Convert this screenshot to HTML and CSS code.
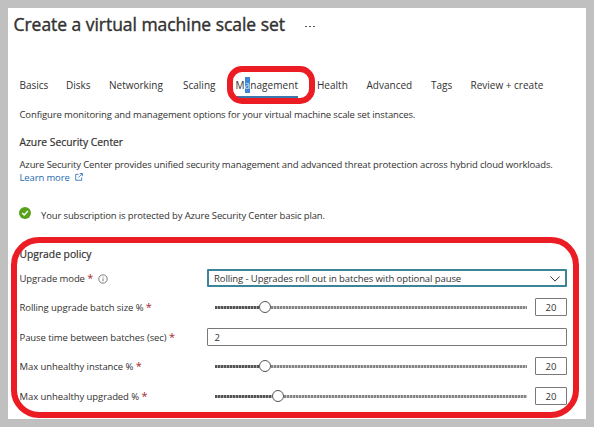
FILE: index.html
```
<!DOCTYPE html>
<html lang="en">
<head>
<meta charset="utf-8">
<title>Create a virtual machine scale set</title>
<link rel="stylesheet" href="styles.css">
</head>
<body>
<main class="panel">
  <header class="header">
    <h1 class="title">Create a virtual machine scale set</h1>
    <span class="more"><i></i><i></i><i></i></span>
  </header>
  <nav class="tabs">
    <span class="tab">Basics</span>
    <span class="tab">Disks</span>
    <span class="tab">Networking</span>
    <span class="tab">Scaling</span>
    <span class="tab active">M<mark>a</mark>nagement</span>
    <span class="tab">Health</span>
    <span class="tab">Advanced</span>
    <span class="tab">Tags</span>
    <span class="tab">Review + create</span>
  </nav>
  <p class="intro">Configure monitoring and management options for your virtual machine scale set instances.</p>
  <h2 class="section">Azure Security Center</h2>
  <p class="about">Azure Security Center provides unified security management and advanced threat protection across hybrid cloud workloads.<br>
    <a class="link">Learn more<svg class="ext" viewBox="0 0 9 9"><path d="M4 1.5H.8v6.7h6.7V5M5.3.6h3v3M8.2.7 3.8 5.1"/></svg></a></p>
  <div class="status">
    <svg class="ok" viewBox="0 0 12 12"><circle cx="6" cy="6" r="6"/><path d="m3.2 6.1 2 2 3.7-4"/></svg>
    <span>Your subscription is protected by Azure Security Center basic plan.</span>
  </div>
  <h2 class="section policy">Upgrade policy</h2>
  <div class="form">
    <div class="row">
      <label class="label">Upgrade mode <b>*</b><svg class="info" viewBox="0 0 10 10"><circle cx="5" cy="5" r="4.2"/><path d="M5 4.3v3M5 2.6v.9"/></svg></label>
      <div class="field select"><span>Rolling - Upgrades roll out in batches with optional pause</span><svg class="chev" viewBox="0 0 10 6"><path d="m.4.5 4.6 4.6L9.6.5"/></svg></div>
    </div>
    <div class="row">
      <label class="label">Rolling upgrade batch size % <b>*</b></label>
      <div class="slider"><span class="track done low"></span><span class="knob"></span><span class="track"></span></div>
      <div class="field value">20</div>
    </div>
    <div class="row">
      <label class="label">Pause time between batches (sec) <b>*</b></label>
      <div class="field">2</div>
    </div>
    <div class="row">
      <label class="label">Max unhealthy instance % <b>*</b></label>
      <div class="slider"><span class="track done low"></span><span class="knob"></span><span class="track"></span></div>
      <div class="field value">20</div>
    </div>
    <div class="row">
      <label class="label">Max unhealthy upgraded % <b>*</b></label>
      <div class="slider"><span class="track done high"></span><span class="knob"></span><span class="track"></span></div>
      <div class="field value">20</div>
    </div>
  </div>
</main>
<div class="callout tab-callout"></div>
<div class="callout policy-callout"></div>
</body>
</html>
```
FILE: styles.css
```
* { box-sizing: border-box; }
body {
  margin: 0;
  width: 594px;
  height: 427px;
  padding: 8px;
  overflow: hidden;
  background: #c0c0c0;
  color: #323130;
  font: 9.5px/13px "Open Sans", "Noto Sans", sans-serif;
  white-space: nowrap;
}
h1, h2, p { margin: 0; }
svg { fill: none; stroke: currentColor; }
.panel { width: 578px; height: 411px; padding: 4px 0 0 11.5px; background: #fff; }
.header { display: flex; height: 24px; margin-left: -6px; }
.title { width: 291px; font-size: 17.5px; line-height: 25px; font-weight: 400; letter-spacing: -.04px; -webkit-text-stroke: .4px; }
.more { display: flex; gap: 2px; padding-top: 14px; }
.more i { width: 2px; height: 1px; background: #555; }
.tabs {
  display: grid;
  grid-template-columns: 46.5px 43px 74px 52.5px 81.5px 49.5px 64.5px 39.5px 80px;
  height: 23px;
  margin-top: 39px;
  font-size: 10px;
  line-height: 20px;
}
.tab { justify-self: start; }
.active { border-bottom: 2px solid #3a78b0; letter-spacing: .07px; }
mark { padding: 1px 0; background: #3e86d6; color: #cfe3f8; }
.intro { margin-top: 10px; letter-spacing: -.13px; }
.section { margin-top: 14px; font-size: 10.3px; line-height: 15px; font-weight: 400; -webkit-text-stroke: .2px; }
.about { margin-top: 8px; letter-spacing: -.14px; }
.link { color: #1f6bb0; }
.ext { width: 8px; height: 8px; margin-left: 5px; stroke-width: .9; vertical-align: 0; }
.status { display: flex; height: 14px; margin: 23px 0 0 -.5px; letter-spacing: -.14px; line-height: 17px; }
.ok { width: 12px; height: 12px; margin-right: 10px; }
.ok circle { fill: #57a11b; stroke: none; }
.ok path { stroke: #fff; stroke-width: 1.4; }
.policy { margin-top: 26px; }
.form { display: grid; grid-template-rows: 29px 30px 29px 30px 18px; margin-top: 7px; width: 547.5px; }
.row { display: flex; height: 18px; }
.label { width: 187.5px; line-height: 20px; letter-spacing: -.08px; }
.label b { font-size: 11px; line-height: 1; font-weight: 400; color: #a4262c; }
.info { width: 10px; height: 10px; margin-left: 5px; vertical-align: -2px; stroke-width: .8; color: #605e5c; }
.field { display: flex; flex: 1; align-items: center; justify-content: space-between; border: 1px solid #7a7877; border-radius: 1px; padding: 0 7px 0 6.5px; }
.select { border: 2px solid #3d8499; padding: 1px 5px 0 5px; letter-spacing: -.09px; }
.chev { width: 10px; height: 6px; stroke-width: 1; }
.value { flex: 0 0 32px; justify-content: center; padding: 0; }
.slider { display: flex; align-items: center; width: 312px; margin: 0 8px; }
.track { flex: 1; height: 3px; background: repeating-linear-gradient(90deg, #858585 0 2px, #c8c8c8 2px 3px); }
.done { flex: none; background: repeating-linear-gradient(90deg, #555 0 2px, #a5a5a5 2px 3px); }
.low { width: 44px; }
.high { width: 57px; }
.knob { width: 12px; height: 12px; border: 1px solid #555; border-radius: 50%; background: #fff; }
.callout { position: absolute; border: 6px solid #ec1c24; }
.tab-callout { left: 227px; top: 66px; width: 88px; height: 38px; border-radius: 15px; }
.policy-callout { left: 11px; top: 237px; width: 568px; height: 181px; border-radius: 28px; }
```
